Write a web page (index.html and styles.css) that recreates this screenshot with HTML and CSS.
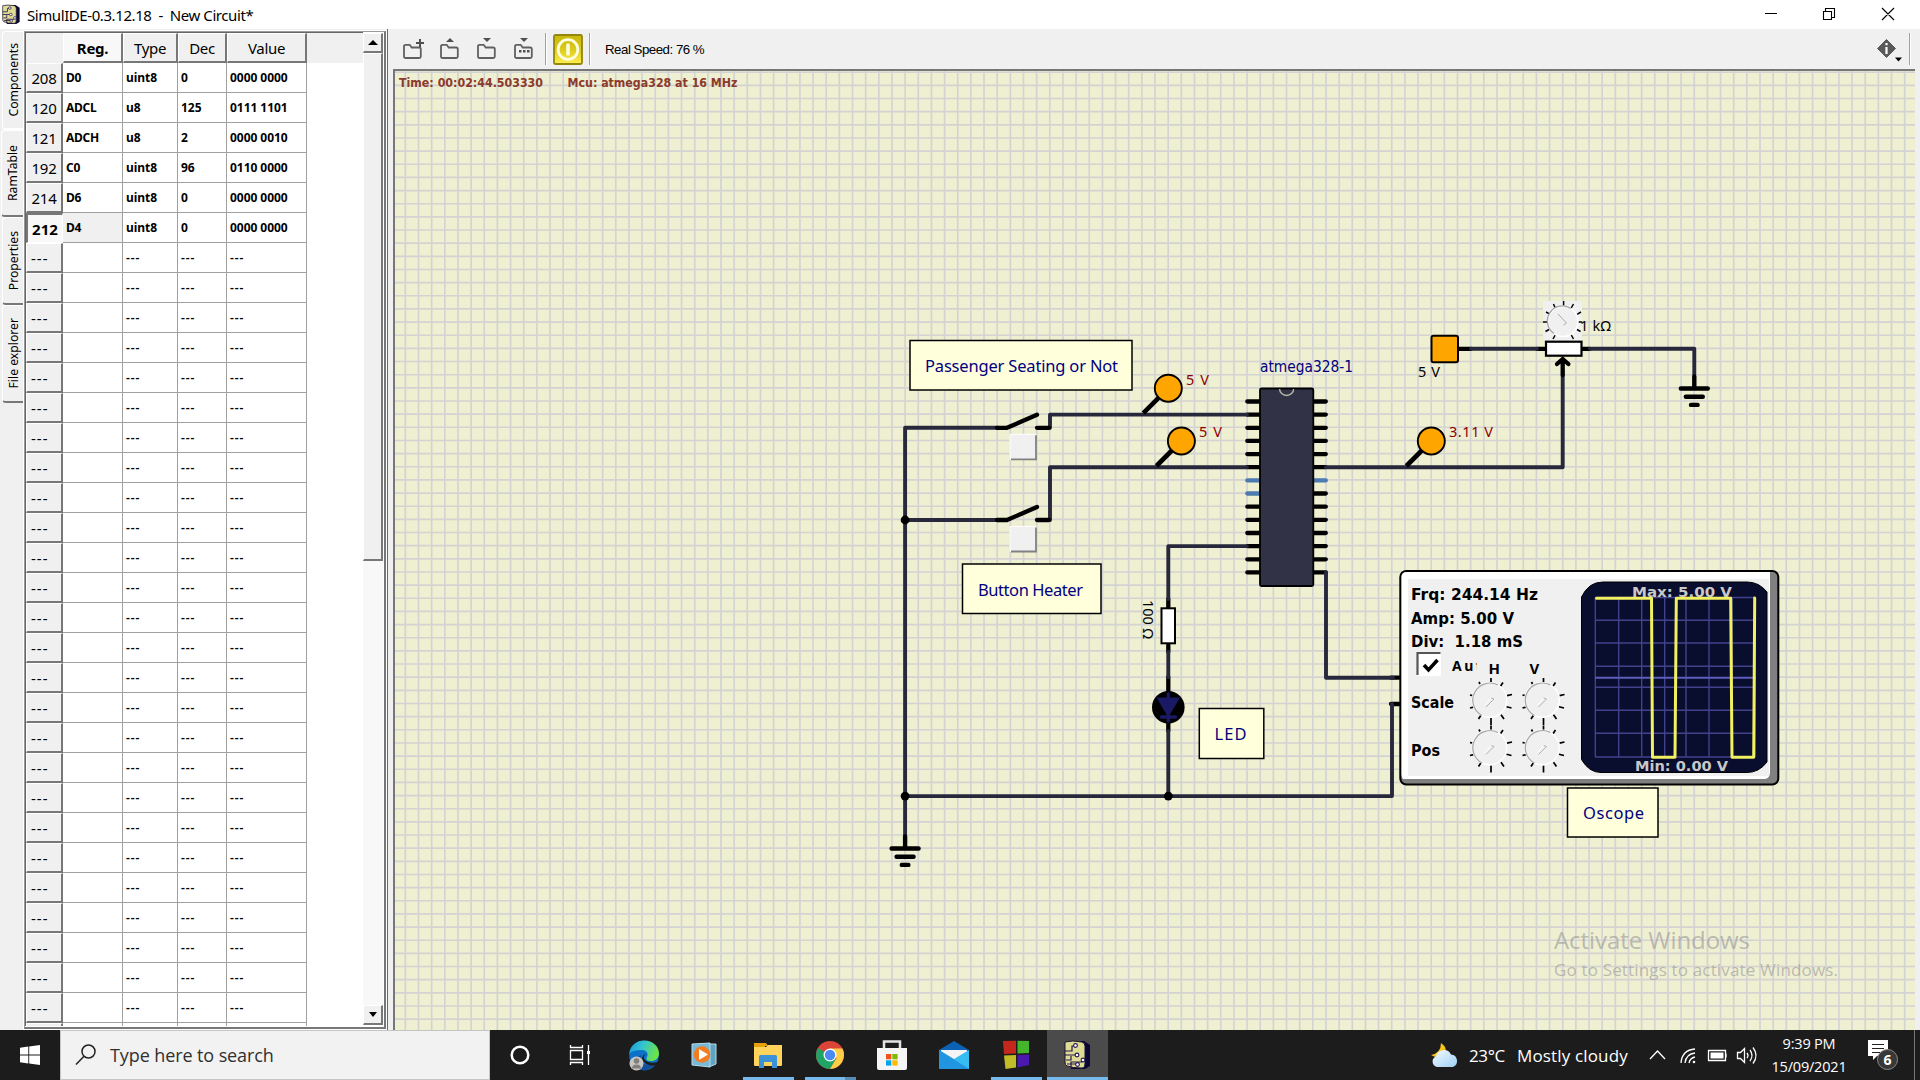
FILE: index.html
```html
<!DOCTYPE html>
<html lang="en">
<head>
<meta charset="utf-8">
<title>SimulIDE-0.3.12.18 - New Circuit*</title>
<link rel="stylesheet" href="styles.css">
</head>
<body>
<svg width="0" height="0" class="defs">
  <defs>
    <symbol id="board" viewBox="0 0 28 30">
      <path d="M5 1h15l6 4v21l-5 3H7z" fill="#0b0638"/>
      <path d="M1 2Q8 0 18 2q3 1 3 4v17q0 5-3 5-9 0-15-2-2-1-2-4z" fill="#dedc94" stroke="#1c1430" stroke-width="1"/>
      <path d="M1 11h7V6h3M1 15h11M2 20h5v-4M7 27v-5h11v-1M3 24h9" fill="none" stroke="#241650" stroke-width="1.2"/>
      <g fill="#fff" stroke="#241650" stroke-width="1.1"><circle cx="11.500" cy="5.500" r="1.900"/><circle cx="13" cy="15" r="1.900"/><circle cx="19" cy="20" r="1.900"/><circle cx="13.500" cy="24.500" r="1.900"/></g>
    </symbol>
    <symbol id="folder" viewBox="0 0 22 22" overflow="visible">
      <path d="M2 18.500V8.500q0-1.700 1.700-1.700h4l2 2.700h7.500q1.600 0 1.600 1.600v7.400q0 1.500-1.600 1.500H3.600Q2 20 2 18.500z" fill="none" stroke="#606060" stroke-width="1.800"/>
    </symbol>
    <g id="knob">
      <g stroke="#000" stroke-width="1.700"><path d="M0-22v4.500M12-17.500l-2.700 4M-12-18l1 2M21-5.500l-5 1.200M20.500 8l-5-1.300M-21-5l3 .7M-21 8l3.500-.9M13 19l-3-4.200M-12.500 19l2.800-4.200M0 18v7"/></g>
      <circle cx="-1.500" cy="0" r="17.200" fill="#f0f0f0" stroke="#fff" stroke-width="1.400"/>
      <path d="M-9 15.500A17.200 17.200 0 0 1 7-15" fill="none" stroke="#a5a5a5" stroke-width="1.200"/>
      <path d="M-5 7L3-1l-3-1" fill="none" stroke="#aaa" stroke-width=".9"/>
      <path d="M-6 5L0-2" stroke="#fff" stroke-width="1"/>
    </g>
    <g id="ground" stroke="#000" stroke-width="4.400" stroke-linecap="round"><path d="M0-11V0M-13.500 1H13.500M-8.500 9.200H8.500M-3.300 17.400H3.300"/></g>
    <g id="probe"><path d="M-25 25L-9 9" stroke="#000" stroke-width="4.600"/><circle r="13.500" fill="#ffa500" stroke="#000" stroke-width="1.900"/></g>
    <g id="switch"><path d="M-14 0h10L26-13M26 0h12" fill="none" stroke="#000" stroke-width="4.300" stroke-linecap="round" stroke-linejoin="round"/><path d="M-1 6.500h26v25H-1z" fill="#f0f0f0" stroke="#fff"/><path d="M0 31.500h25V7.500" fill="none" stroke="#808080" stroke-width="1.800"/></g>
  </defs>
</svg>

<header class="titlebar">
  <svg class="app-icon" width="19" height="21"><use href="#board"/></svg>
  <span class="title">SimulIDE-0.3.12.18&nbsp; -&nbsp; New Circuit*</span>
  <svg class="window-buttons" width="160" height="29" fill="none" stroke="#000" stroke-width="1.100"><path d="M5 13.500h12M63.500 11.500h8v8h-8zM65.500 11V8.500h9v9H72M122 8l12 12M134 8l-12 12"/></svg>
</header>

<main class="workspace">
  <aside class="side">
    <nav class="tabs">
      <div class="tab components"><span>Components</span></div>
      <div class="tab ram active"><span>RamTable</span></div>
      <div class="tab props"><span>Properties</span></div>
      <div class="tab files"><span>File explorer</span></div>
    </nav>
    <section class="table-frame">
      <div class="table-view">
        <table>
          <thead><tr><th class="corner"></th><th class="current">Reg.</th><th>Type</th><th>Dec</th><th>Value</th></tr></thead>
          <tbody>
            <tr><th>208</th><td>D0</td><td>uint8</td><td>0</td><td>0000 0000</td></tr>
            <tr><th>120</th><td>ADCL</td><td>u8</td><td>125</td><td>0111 1101</td></tr>
            <tr><th>121</th><td>ADCH</td><td>u8</td><td>2</td><td>0000 0010</td></tr>
            <tr><th>192</th><td>C0</td><td>uint8</td><td>96</td><td>0110 0000</td></tr>
            <tr><th>214</th><td>D6</td><td>uint8</td><td>0</td><td>0000 0000</td></tr>
            <tr class="selected"><th>212</th><td>D4</td><td>uint8</td><td>0</td><td>0000 0000</td></tr>
          </tbody>
          <tbody class="empty">
            <tr><th>---<td><td>---<td>---<td>---
            <tr><th>---<td><td>---<td>---<td>---
            <tr><th>---<td><td>---<td>---<td>---
            <tr><th>---<td><td>---<td>---<td>---
            <tr><th>---<td><td>---<td>---<td>---
            <tr><th>---<td><td>---<td>---<td>---
            <tr><th>---<td><td>---<td>---<td>---
            <tr><th>---<td><td>---<td>---<td>---
            <tr><th>---<td><td>---<td>---<td>---
            <tr><th>---<td><td>---<td>---<td>---
            <tr><th>---<td><td>---<td>---<td>---
            <tr><th>---<td><td>---<td>---<td>---
            <tr><th>---<td><td>---<td>---<td>---
            <tr><th>---<td><td>---<td>---<td>---
            <tr><th>---<td><td>---<td>---<td>---
            <tr><th>---<td><td>---<td>---<td>---
            <tr><th>---<td><td>---<td>---<td>---
            <tr><th>---<td><td>---<td>---<td>---
            <tr><th>---<td><td>---<td>---<td>---
            <tr><th>---<td><td>---<td>---<td>---
            <tr><th>---<td><td>---<td>---<td>---
            <tr><th>---<td><td>---<td>---<td>---
            <tr><th>---<td><td>---<td>---<td>---
            <tr><th>---<td><td>---<td>---<td>---
            <tr><th>---<td><td>---<td>---<td>---
            <tr><th>---<td><td>---<td>---<td>---
            <tr><th><td><td><td><td>
          </tbody>
        </table>
        <div class="header-rest"></div>
      </div>
      <div class="scrollbar">
        <div class="bevel arrow"><svg width="10" height="5"><path d="M0 5l5-5 5 5z"/></svg></div>
        <div class="bevel thumb"></div>
        <div class="track"></div>
        <div class="bevel arrow"><svg width="8" height="5"><path d="M0 0h8L4 5z"/></svg></div>
      </div>
    </section>
  </aside>

  <section class="editor">
    <div class="toolbar">
      <svg class="file-tools" width="140" height="30" viewBox="402 35 140 30">
        <use href="#folder" x="402" y="39" width="22" height="22"/><path d="M420 40v8M416 44h8" stroke="#505050" stroke-width="2"/>
        <use href="#folder" x="439" y="39" width="22" height="22"/><path d="M446 43l4-4 4 4z" fill="#505050"/>
        <use href="#folder" x="476" y="39" width="22" height="22"/><path d="M483 39h8l-4 4z" fill="#505050"/>
        <use href="#folder" x="513" y="39" width="22" height="22"/><path d="M520 39h8l-4 4zM519 51h2.500v2.500H519zM523 51h2.500v2.500H523zM527 51h2.500v2.500H527z" fill="#505050"/>
      </svg>
      <i class="sep"></i>
      <svg class="power" width="30" height="31"><defs><linearGradient id="gold" x2="0" y2="1"><stop stop-color="#c9b90d"/><stop offset=".45" stop-color="#d8c818"/><stop offset="1" stop-color="#ffee4d"/></linearGradient></defs><rect x="1" y="1" width="28" height="29" rx="1.500" fill="url(#gold)" stroke="#92860b" stroke-width="1.800"/><circle cx="15" cy="15.500" r="9.800" fill="none" stroke="#fffde0" stroke-width="2.800"/><path d="M15 11v9" stroke="#fffde0" stroke-width="3.600" stroke-linecap="round"/></svg>
      <i class="sep"></i>
      <span class="speed">Real Speed: 76 %</span>
      <svg class="info" width="26" height="26"><path d="M9.500.5l9 9-9 9-9-9z" fill="#595959" stroke="#595959" stroke-linejoin="round"/><path d="M9.500 8v7M9.500 4v2.200" stroke="#fff" stroke-width="2.200"/><path d="M18 18.500h7l-3.500 4z"/></svg>
      <i class="sep last"></i>
    </div>
    <svg class="canvas" viewBox="395 71 1520 959" width="1520" height="959">
      <rect x="395" y="71" width="1520" height="959" fill="#efefd1"/>
      <g stroke="#d3d3d3" stroke-dasharray="1.640 11.512">
        <path d="M391.380 550.500H1915" stroke-width="959"/>
        <path d="M1155 71.380V1030" stroke-width="1520"/>
      </g>

      <g class="status" fill="#8b3a2b">
        <text x="399" y="87" textLength="144" lengthAdjust="spacingAndGlyphs">Time: 00:02:44.503330</text>
        <text x="567.500" y="87" textLength="170" lengthAdjust="spacingAndGlyphs">Mcu: atmega328 at 16 MHz</text>
      </g>

      <g class="pins" stroke="#000">
        <path d="M1247.300 401.500h78.500M1247.300 414.600h78.500M1247.300 427.800h78.500M1247.300 440.900h78.500M1247.300 454.100h78.500M1247.300 467.200h78.500M1247.300 506.700h78.500M1247.300 519.800h78.500M1247.300 533h78.500M1247.300 546.100h78.500M1247.300 559.300h78.500M1247.300 572.400h78.500M1300 493.500h25.800"/>
        <path d="M1247.300 480.400h78.500M1247.300 493.500h30" stroke="#4b7bb0"/>
        <path d="M1459 348.800h12M1537 348.800h8M1582 348.800h8M1168.300 599v9M1168.300 645v7M1168.300 677v14M1168.300 722v9M1391 677.700h8M1391 704h8"/>
      </g>

      <g class="wires">
        <path d="M1247 414.600H1050v13.200M1247 467.200H1050V520M998 427.800H905.100V836M905.100 520H998"/>
        <path d="M1247 546.100H1168.300V599M1168.300 652V677M1168.300 731V796.100M905.100 796.100H1392V704M1326 572.400V677.700H1393"/>
        <path d="M1326 467.200H1562.700V375M1471 348.800H1537M1590 348.800H1694.300V375"/>
      </g>
      <circle cx="905.100" cy="520" r="4.400"/><circle cx="905.100" cy="796.100" r="4.400"/><circle cx="1168.300" cy="796.100" r="4.400"/>
      <use href="#ground" x="905.100" y="847.500"/><use href="#ground" x="1694.300" y="387.500"/>
      <use href="#switch" x="1011" y="427.800"/><use href="#switch" x="1011" y="520"/>
      <use href="#probe" x="1168.300" y="388.200"/><use href="#probe" x="1181.400" y="441"/><use href="#probe" x="1431.300" y="441"/>

      <rect x="1260" y="388.500" width="53.300" height="197.500" rx="1.500" fill="#323246" stroke="#000" stroke-width="1.800"/>
      <path d="M1279.600 389a7 6.500 0 0 0 14 0" fill="none" stroke="#b8b8a8" stroke-width="1.400"/>

      <rect x="1431.500" y="335.700" width="26.500" height="26.500" rx="2" fill="#ffa500" stroke="#000" stroke-width="2"/>
      <rect x="1543" y="301" width="39" height="40" fill="#f0f0f0"/>
      <g stroke="#000" stroke-width="1.500"><path d="M1563.600 301v4.500M1573.500 304l-2.300 4M1553.500 304l1.500 3.500M1581 312l-4 2.300M1546 312l3 1.700M1582 322h-4M1543 322h4M1580.500 331.500l-3.500-2M1545.500 331.500l3.500-2M1573.500 339l-2.500-4.500M1553 339l2.500-4.500"/></g>
      <circle cx="1563" cy="321.500" r="15" fill="#f0f0f0" stroke="#fff" stroke-width="1.500"/><path d="M1554 333.500a15 15 0 0 1 17-25" fill="none" stroke="#a3a3a3" stroke-width="1.300"/>
      <path d="M1558 314l8.500 9-3 2" fill="none" stroke="#aaa"/>
      <rect x="1546" y="341.700" width="35.500" height="14" fill="#fff" stroke="#000" stroke-width="2.200"/>
      <path d="M1562.700 375v-14M1557 364l5.700-5 5.700 5" fill="none" stroke="#000" stroke-width="4.300" stroke-linecap="round"/>

      <rect x="1161.500" y="608.300" width="13.500" height="35" fill="#fff" stroke="#000" stroke-width="2"/>
      <circle cx="1168.300" cy="707.300" r="16.300"/>
      <path d="M1168.300 694v27M1161.500 717h14" stroke="#1a1a64" stroke-width="3.300" stroke-linecap="round"/><path d="M1156.500 697.500h23.500l-11.800 20z" fill="#1a1a64"/>

      <g class="notes">
        <rect x="910" y="340.500" width="222" height="49.500"/><text x="925" y="372" textLength="193">Passenger Seating or Not</text>
        <rect x="962.500" y="564" width="138.500" height="49.500"/><text x="978" y="595.500" textLength="105">Button Heater</text>
        <rect x="1199.300" y="708.500" width="64.500" height="50"/><text x="1214.500" y="740" textLength="32">LED</text>
        <rect x="1567.500" y="788" width="90.500" height="49"/><text x="1583" y="819" textLength="61">Oscope</text>
      </g>
      <text x="1260" y="372" class="chip-name" textLength="93" lengthAdjust="spacingAndGlyphs">atmega328-1</text>
      <g class="values">
        <g fill="#8b0000"><text x="1186" y="385" textLength="23">5 V</text><text x="1199" y="437" textLength="23">5 V</text><text x="1449" y="437" textLength="44">3.11 V</text></g>
        <text x="1418" y="377" textLength="22">5 V</text><text x="1580" y="331" textLength="31">1 kΩ</text>
        <text transform="translate(1142.500 600) rotate(90)" textLength="39">100 Ω</text>
      </g>

      <g class="scope">
        <rect x="1400.300" y="571" width="378" height="213.500" rx="6" fill="#808080" stroke="#000" stroke-width="2"/>
        <path d="M1407 572h363v200q0 6-5 7H1403q-1.500-2-1.500-5V577q0-5 5.500-5z" fill="#fff"/>
        <rect x="1408" y="579" width="361" height="197" fill="#f0f0f0"/>
        <g class="readout"><text x="1411" y="600" textLength="127" lengthAdjust="spacingAndGlyphs">Frq: 244.14 Hz</text><text x="1411" y="624" textLength="103" lengthAdjust="spacingAndGlyphs">Amp: 5.00 V</text><text x="1411" y="647" textLength="112" lengthAdjust="spacingAndGlyphs">Div: &#160;1.18 mS</text><text x="1411" y="708" textLength="43" lengthAdjust="spacingAndGlyphs">Scale</text><text x="1411" y="756" textLength="29" lengthAdjust="spacingAndGlyphs">Pos</text></g>
        <path d="M1417 652h24v24h-24z" fill="#fff"/><path d="M1417.500 675v-22h23" fill="none" stroke="#555" stroke-width="2.200"/><path d="M1424 665l4.500 5 9-10" fill="none" stroke="#000" stroke-width="3.500"/>
        <svg x="1450" y="655" width="27" height="20"><text x="2" y="15.500" class="small" textLength="41">Auto</text></svg>
        <text x="1488.500" y="673.500" class="axis">H</text><text x="1529.500" y="673.500" class="axis">V</text>
        <use href="#knob" x="1491" y="700"/><use href="#knob" x="1543.500" y="700"/><use href="#knob" x="1491" y="747.500"/><use href="#knob" x="1543.500" y="747.500"/>
        <path d="M1603 582h144q12 0 20 10v170q-8 10.500-20 10.500H1601q-12 0-19.500-13V597q7-15 21.500-15z" fill="#090d2e" stroke="#000"/>
        <path d="M1595.300 597.500V757M1618.700 597.500V757M1641.700 597.500V757M1664.700 597.500V757M1686 597.500V757M1709 597.500V757M1732 597.500V757M1755 597.500V757M1595 597.500h160M1595 620.300h160M1595 643h160M1595 666.300h160M1595 687.300h160M1595 710.300h160M1595 733.300h160M1595 757h160" stroke="#42428c" stroke-width="1.400"/>
        <path d="M1595 677.700h161" stroke="#5d5dbb" stroke-width="2"/>
        <g class="limits"><text x="1632" y="596.500" textLength="100" lengthAdjust="spacingAndGlyphs">Max: 5.00 V</text><text x="1635" y="771" textLength="93" lengthAdjust="spacingAndGlyphs">Min: 0.00 V</text></g>
        <path d="M1596.500 598.300H1651.500L1652.500 757.300H1675L1676.300 598.300H1730.700L1732 757.300H1753.700L1754.700 598" fill="none" stroke="#f0f060" stroke-width="3" stroke-linejoin="round" stroke-linecap="round"/>
      </g>
      <g class="watermark"><text x="1554" y="948.500" font-size="24" textLength="196">Activate Windows</text><text x="1554" y="976" font-size="17" textLength="284">Go to Settings to activate Windows.</text></g>
    </svg>
  </section>
</main>

<footer class="taskbar">
  <div class="start"><svg width="20" height="20" fill="#fff"><path d="M0 2.800L8.300 1.600v8H0zM9.200 1.500L20 0v9.600H9.200zM0 10.500h8.300v8L0 17.300zM9.200 10.500H20V20L9.200 18.600z"/></svg></div>
  <div class="search"><svg width="22" height="22" fill="none" stroke="#222" stroke-width="1.500"><circle cx="13.500" cy="7.500" r="6.500"/><path d="M9 12.200L1 20.500"/></svg><span>Type here to search</span></div>
  <div class="apps">
    <div class="app"><svg width="22" height="22"><circle cx="11" cy="11" r="8.300" fill="none" stroke="#fff" stroke-width="2.500"/></svg></div>
    <div class="app"><svg class="nudge" width="22" height="20" fill="none" stroke="#fff" stroke-width="1.300"><path d="M1.500 5.500h12v9h-12zM1.500 0v2.500h12V0M1.500 20v-2.500h12V20M19.500 0v20"/><path d="M18 6h3v3h-3z" fill="#fff" stroke="none"/></svg></div>
    <div class="app"><svg width="31" height="31"><defs><linearGradient id="edge" x2="1" y2=".3"><stop stop-color="#1597dc"/><stop offset=".5" stop-color="#35c4cf"/><stop offset="1" stop-color="#6be34a"/></linearGradient></defs><circle cx="15" cy="15.500" r="14.800" fill="#0c72c9"/><path d="M.3 14C1 5 8 .5 15 .5c9 0 15 6 15 13 0 5-4 7.500-8 7.500-5 0-5-2-4-4 2-4-1-7-5-7C7 10 2 11 .3 14z" fill="url(#edge)"/><path d="M12 15q-2 10 9 10 5 0 8-4-5 9.500-14 9.500-9-2-8-9 .5-5 5-6.500z" fill="#154f9a"/><path d="M17 14q-4 3-1 6 4 4 13 2l1-1v2l-2 2q-4 1-8 0-6-2-7-6 0-4 4-5z" fill="#1c1c1c"/><circle cx="7.500" cy="23.500" r="7" fill="#c8c6c4"/><circle cx="7.500" cy="21" r="2.800" fill="#827f7c"/><path d="M3 28.500q0-4 4.500-4t4.500 4z" fill="#827f7c"/></svg></div>
    <div class="app"><svg class="nudge" width="26" height="26"><path d="M16 2h9v20l-7 3z" fill="#5fa3bf" stroke="#b7dbe8"/><path d="M1 2l18-1v24L1 23z" fill="#79b8d6" stroke="#b3dcec"/><circle cx="11" cy="12.500" r="8.300" fill="#f37b20"/><path d="M8 7v11l9-5.500z" fill="#fff"/></svg></div>
    <div class="app open"><svg width="28" height="26"><path d="M0 1h12l2 3h-3v5H0z" fill="#e5a00d"/><path d="M0 5h12l2-2h14v20q0 1-1 1H1q-1 0-1-1z" fill="#ffd35c"/><path d="M5 26V14.500Q5 13 6.500 13h15q1.500 0 1.500 1.500V26h-5v-6h-8v6z" fill="#3c92d8"/></svg></div>
    <div class="app open double"><svg width="28" height="28"><circle cx="14" cy="14" r="14" fill="#db4437"/><path d="M14 14L1.900 7A14 14 0 0 0 14 28l6-10z" fill="#20a366"/><path d="M14 7.500h12.400A14 14 0 0 1 14 28l6.500-11z" fill="#ffcd46"/><circle cx="14" cy="14" r="6.500" fill="#fff"/><circle cx="14" cy="14" r="5.200" fill="#4a8af4"/></svg></div>
    <div class="app"><svg width="30" height="30"><path d="M7 11V1.500h16V11" fill="none" stroke="#e5e5e5" stroke-width="2.500"/><path d="M0 8h30v20q0 2-2 2H2q-2 0-2-2z" fill="#f5f5f5"/><path d="M9 14h5.300v5.300H9z" fill="#f1511b"/><path d="M15.300 14h5.300v5.300h-5.300z" fill="#80b900"/><path d="M9 20.300h5.300v5.300H9z" fill="#00a4ef"/><path d="M15.300 20.300h5.300v5.300h-5.300z" fill="#ffb900"/></svg></div>
    <div class="app"><svg width="30" height="30"><path d="M0 10L15 1l15 9v19H0z" fill="#0b62b5"/><path d="M2 10h26v10H2z" fill="#f5f5f5"/><path d="M0 10l15 9 15-9v19H0z" fill="#35bdf2"/><path d="M0 10l30 19H0z" fill="#2295e0"/></svg></div>
    <div class="app open"><svg width="28" height="30"><path d="M1 1l13-.3V13.500L2 14z" fill="#c4281c"/><path d="M15.500.7L27 1v12l-11.500.4z" fill="#45b52b"/><path d="M2 15.500l12-.5v12.500L3.500 29z" fill="#c2bd26"/><path d="M15.500 15L27 14.500v10.500l-11.500 2.500z" fill="#4b18b0"/></svg></div>
    <div class="app open current"><svg width="28" height="30"><use href="#board"/></svg></div>
  </div>
  <div class="tray">
    <svg width="29" height="26" class="weather"><defs><linearGradient id="cloud" x2="1" y2="1"><stop stop-color="#f4faff"/><stop offset="1" stop-color="#9fd1f5"/></linearGradient></defs><path d="M10 0q7 5 4 11-6 6-14 1 10-2 10-12z" fill="#fbc51d"/><path d="M6 24a5.500 5.500 0 0 1-1-10.500 8 8 0 0 1 15-2 6.500 6.500 0 0 1 2 12.500z" fill="url(#cloud)"/></svg>
    <span class="temp">23°C</span><span class="sky">Mostly cloudy</span>
    <svg class="status-icons" width="112" height="22" viewBox="1648 1044 112 22" fill="none" stroke="#fff" stroke-width="1.300"><path d="M1650 1059l7.500-8 7.500 8"/><path d="M1681 1063q1-13 14-14M1685 1063q1-9 10-10M1689 1063q1-5 6-6" /><circle cx="1694" cy="1062" r="1.300" fill="#fff" stroke="none"/><path d="M1708.500 1050.500h17v10h-17zM1726 1053.500v4"/><path d="M1710.500 1052.500h13v6h-13z" fill="#fff" stroke="none"/><path d="M1737.500 1052.500h3l4-4v14l-4-4h-3zM1747 1053q2 2.500 0 5M1750 1050q4 5.500 0 11M1753 1047.500q6 8 0 16"/></svg>
    <div class="clock"><span>9:39 PM</span><span class="date">15/09/2021</span></div>
    <svg class="notice" width="32" height="34" viewBox="1868 1043 32 34"><path d="M1869 1045h20v16h-11l-4 4v-4h-5z" fill="#fff"/><path d="M1873 1049.500h12M1873 1053.500h12M1873 1057.500h8" stroke="#222" stroke-width="1.200"/><circle cx="1888.500" cy="1064.500" r="10" fill="#383838" stroke="#8a8a8a"/><text x="1888.500" y="1070" text-anchor="middle">6</text></svg>
    <i class="desktop"></i>
  </div>
</footer>
</body>
</html>
```
FILE: styles.css
```css
* { box-sizing: border-box; }
body { margin: 0; width: 1920px; height: 1080px; overflow: hidden; display: flex; flex-direction: column; background: #f0f0f0; color: #000; font-family: "Open Sans", "Noto Sans", sans-serif; }
svg { display: block; flex: none; }
.defs { position: absolute; }
.titlebar { height: 29px; background: #fff; display: flex; align-items: center; padding-left: 2px; }
.title { margin-left: 6px; font: 15px "Noto Sans", sans-serif; letter-spacing: -.42px; white-space: pre; }
.window-buttons { margin-left: auto; }

.workspace { height: 1001px; display: flex; }
.side { width: 388px; display: flex; border-right: 1px solid #6a6a6a; }
.tabs { width: 24px; padding: 2px 0 0 2px; display: flex; flex-direction: column; }
.tab { width: 21px; display: flex; align-items: center; justify-content: center; border-left: 1px solid #fff; border-top: 1px solid #fff; border-bottom: 2px solid #777; border-radius: 4px 0 0 4px; font: 12.2px "Noto Sans", sans-serif; }
.tab span { writing-mode: vertical-rl; transform: rotate(180deg); line-height: 16px; margin-left: 1px; }
.components { height: 99px; border-bottom-color: #fff; }
.ram { height: 87px; margin-left: -1px; width: 22px; }
.ram span { margin-left: 0; }
.props { height: 88px; }
.files { height: 98px; }

.table-frame { width: 362px; height: 998px; margin-top: 2px; border: 1px solid #9a9a9a; border-right: 2px solid #777; border-bottom: 2px solid #777; outline: 1px solid #fff; background: #fff; display: flex; }
.table-view { width: 338px; height: 994px; overflow: hidden; display: flex; border-top: 1px solid #666; border-left: 1px solid #666; }
table { flex: none; width: 281px; table-layout: fixed; border-collapse: separate; border-spacing: 0; height: max-content; }
th, td { height: 30px; padding: 0; line-height: 20px; white-space: nowrap; }
th { background: #f0f0f0; border-top: 1px solid #fff; border-left: 1px solid #fff; border-right: 2px solid #777; border-bottom: 2px solid #777; font-weight: 400; font-size: 15px; font-family: "Noto Sans", sans-serif; letter-spacing: -.3px; }
thead th:nth-child(1) { width: 37px; }
thead th:nth-child(2) { width: 60px; }
thead th:nth-child(3) { width: 55px; }
thead th:nth-child(4) { width: 49px; }
thead th:nth-child(5) { width: 80px; }
thead .corner { border-color: #f0f0f0; }
thead .current, .selected th { font-weight: 700; background: #f8f8f8; }
td { border-right: 1px solid #a0a0a0; border-bottom: 1px solid #a0a0a0; padding-left: 3px; font: 700 12px/20px "Noto Sans", sans-serif; letter-spacing: -.05px; }
td:nth-child(2) { padding-left: 3px; letter-spacing: -.3px; }
.selected th { border-top: 2px solid #777; border-left: 2px solid #777; border-right: 1px solid #fff; border-bottom: 1px solid #fff; letter-spacing: .1px; }
.selected td:nth-child(2) { background: #f0f0f0; }
.empty td { letter-spacing: .9px; font-weight: 600; }
.empty th { letter-spacing: 1px; text-align: left; padding-left: 4px; }
.header-rest { height: 30px; flex: 1; background: #f0f0f0; }
.scrollbar { width: 20px; display: flex; flex-direction: column; padding-top: 1px; }
.bevel { background: #f0f0f0; border: 1px solid #fff; border-right: 2px solid #777; border-bottom: 2px solid #777; display: flex; align-items: center; justify-content: center; }
.arrow { height: 20px; flex: none; }
.thumb { height: 508px; flex: none; }
.track { flex: 1; background: #f8f8f8; margin-bottom: 0; }
.scrollbar { padding-bottom: 2px; }

.editor { flex: 1; display: flex; flex-direction: column; }
.toolbar { height: 40px; display: flex; align-items: center; padding-left: 14px; }
.sep { width: 2px; height: 32px; border-left: 1px solid #a0a0a0; border-right: 1px solid #fff; }
.file-tools { margin-right: 3px; }
.power { margin: 0 6px; }
.speed { margin-left: 14px; font: 13.3px "Liberation Sans", sans-serif; letter-spacing: -.5px; }
.info { margin-left: auto; margin-right: 6px; margin-top: 6px; }
.last { margin-right: 9px; }
.canvas { margin-left: 5px; border: 2px solid #777; border-right: 0; border-bottom: 0; width: 1522px; height: 961px; }
.canvas text { white-space: pre; }
.status { font: 700 13px "DejaVu Sans", sans-serif; }
.pins { stroke-width: 4.300px; stroke-linecap: round; }
.wires { fill: none; stroke: #28283c; stroke-width: 3.900px; stroke-linejoin: round; stroke-linecap: round; }
.notes rect { fill: #ffffdc; stroke: #000; stroke-width: 1.500px; }
.notes text { fill: #000080; font: 16.500px "Noto Sans", sans-serif; }
.chip-name { fill: #000080; font: 16px "DejaVu Sans", sans-serif; }
.values { font: 14.500px "Noto Sans", sans-serif; }
.readout { font: 700 15.500px "DejaVu Sans", sans-serif; }
.small { font: 700 14px "Noto Sans", sans-serif; }
.axis { font: 700 15px "Noto Sans", sans-serif; }
.limits { fill: #c8c8c8; font: 700 14.500px "DejaVu Sans", sans-serif; }
.watermark { fill: #969696; fill-opacity: .6; font-family: "Open Sans", sans-serif; }

.taskbar { height: 50px; background: #1c1c1c; color: #fff; display: flex; }
.start { width: 60px; display: flex; align-items: center; justify-content: center; }
.search { width: 430px; background: #f2f2f2; border: 1px solid #c5c5c5; color: #303030; display: flex; align-items: center; padding-left: 14px; font-size: 18px; }
.search span { margin-left: 13px; letter-spacing: -.1px; }
.apps { display: flex; margin-left: -1px; }
.app { width: 62px; height: 50px; display: flex; align-items: center; justify-content: center; }
.nudge { margin-right: 4px; }
.open { background: linear-gradient(#76b9ed, #76b9ed) center bottom / 51px 3px no-repeat; }
.double { background: linear-gradient(90deg, #76b9ed 40px, #5b8cb2 40px) center bottom / 51px 3px no-repeat; }
.current.app { width: 61px; background: linear-gradient(#76b9ed, #76b9ed) center bottom / 61px 3px no-repeat, #4b4b4b; }
.tray { margin-left: auto; display: flex; align-items: center; width: 489px; }
.weather { margin-top: 1px; }
.temp, .sky { font-size: 17px; letter-spacing: -.4px; white-space: nowrap; }
.temp { width: 48px; margin-left: 9px; }
.sky { width: 131px; letter-spacing: .15px; }
.clock { width: 98px; display: flex; flex-direction: column; align-items: center; font-size: 14.500px; line-height: 23px; letter-spacing: -.2px; margin-bottom: 1px; }
.notice { margin-left: 9px; }
.notice text { fill: #fff; font: 700 14px "Open Sans", sans-serif; }
.desktop { width: 1px; height: 50px; background: #777; margin-left: auto; margin-right: 5px; }
```
